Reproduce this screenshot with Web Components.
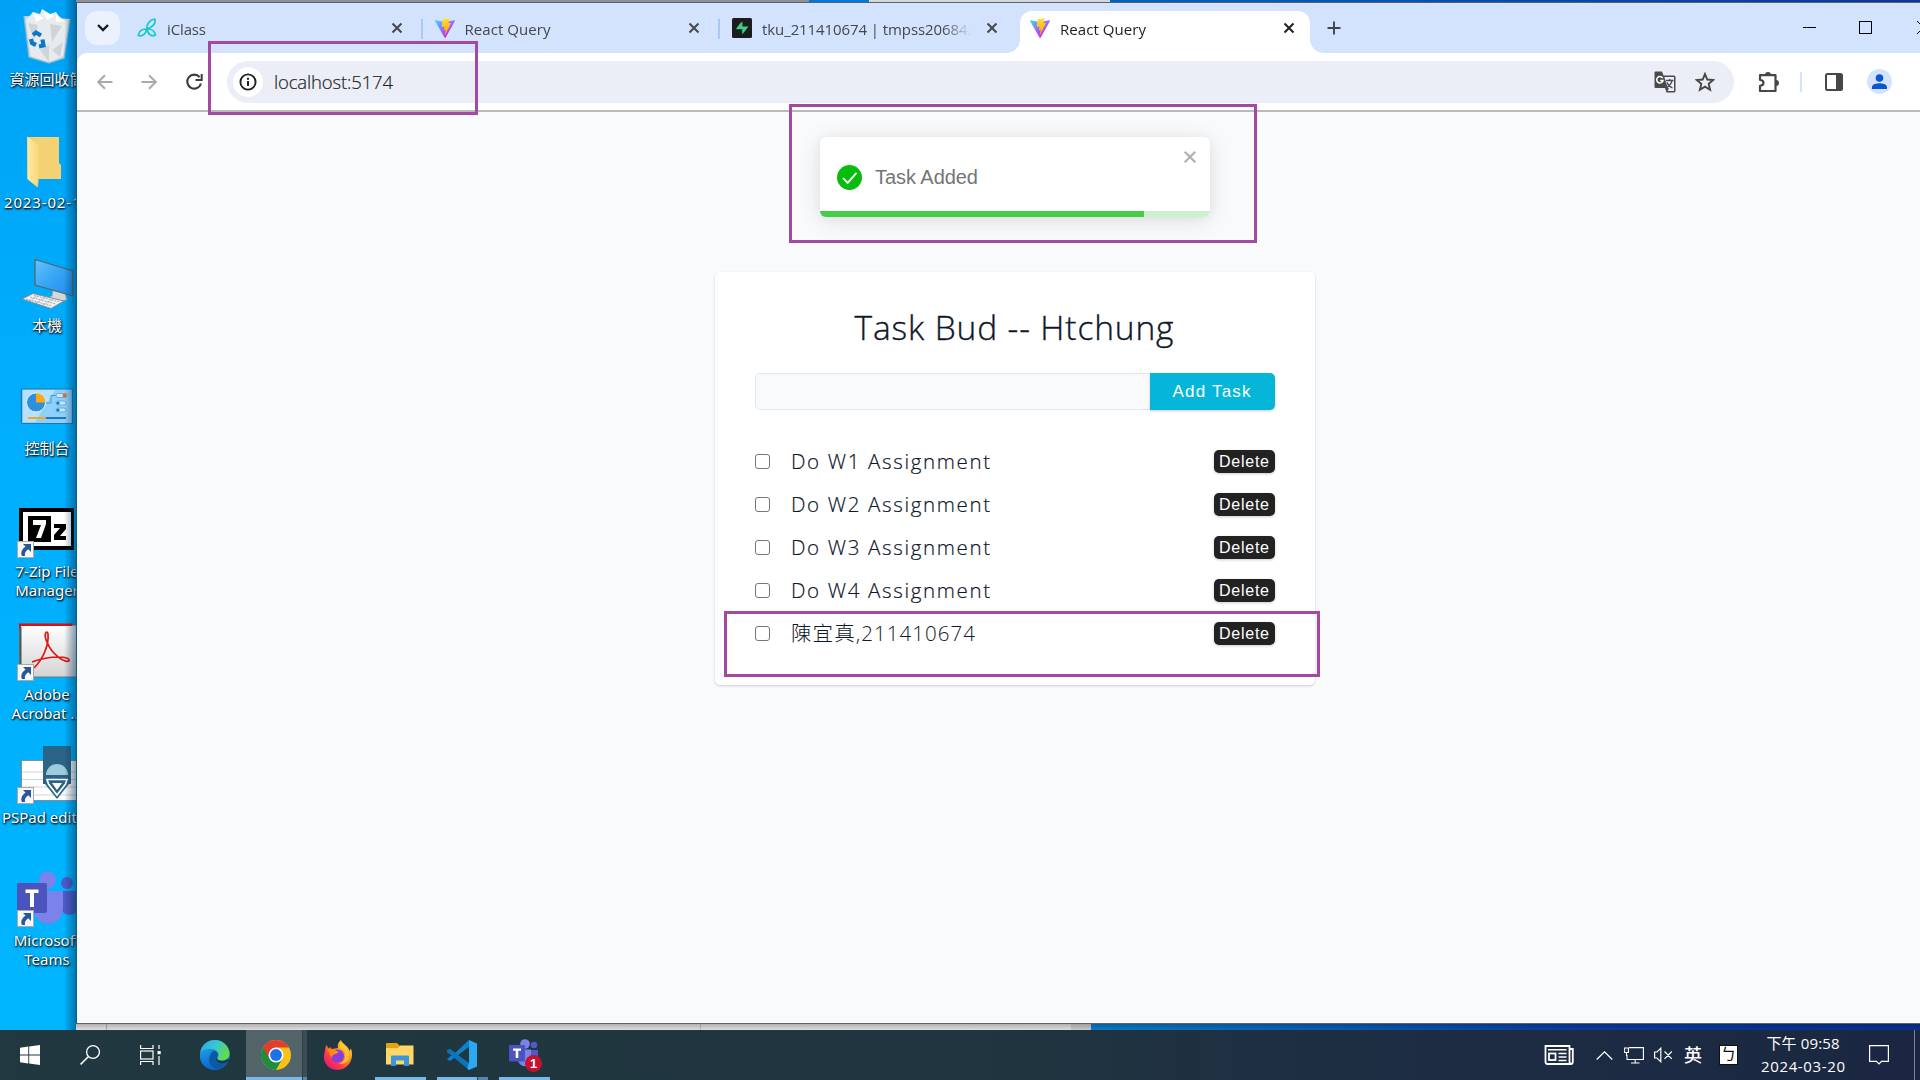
<!DOCTYPE html>
<html lang="zh-Hant">
<head>
<meta charset="utf-8">
<title>React Query</title>
<style>
html,body{margin:0;width:1920px;height:1080px;overflow:hidden}
body{font-family:"Open Sans","Noto Sans CJK TC",sans-serif}
</style>
</head>
<body>
<desktop-screen></desktop-screen>
<script>
const ICONS = {
vite:[256,257,`<defs><linearGradient id="a" x1="-.8%" x2="57.6%" y1="7.6%" y2="78.4%"><stop offset="0" stop-color="#41D1FF"/><stop offset="1" stop-color="#BD34FE"/></linearGradient><linearGradient id="b" x1="43.4%" x2="50.3%" y1="2.2%" y2="89%"><stop offset="0" stop-color="#FFEA83"/><stop offset=".083" stop-color="#FFDD35"/><stop offset="1" stop-color="#FFA800"/></linearGradient></defs><path fill="url(#a)" d="M255.153 37.938L134.897 252.976c-2.483 4.44-8.862 4.466-11.382.048L.875 37.958c-2.746-4.814 1.371-10.646 6.827-9.67l120.385 21.517a6.537 6.537 0 0 0 2.322-.004l117.867-21.483c5.438-.991 9.574 4.796 6.877 9.62Z"/><path fill="url(#b)" d="M185.432.063L96.44 17.501a3.268 3.268 0 0 0-2.634 3.014l-5.474 92.456a3.268 3.268 0 0 0 3.997 3.378l24.777-5.718c2.318-.535 4.413 1.507 3.936 3.838l-7.361 36.047c-.495 2.426 1.782 4.5 4.151 3.78l15.304-4.649c2.372-.72 4.652 1.36 4.15 3.788l-11.698 56.621c-.732 3.542 3.979 5.473 5.943 2.437l1.313-2.028l72.516-144.72c1.215-2.423-.88-5.186-3.54-4.672l-25.505 4.922c-2.396.462-4.435-1.77-3.759-4.114l16.646-57.705c.677-2.35-1.37-4.583-3.769-4.113Z"/>`],
iclass:[20,20,`<g fill="none" stroke="#19c8cf" stroke-width="1.700" stroke-linejoin="round"><path d="M9.800 11C9.500 6 13 1.600 17.800 1.200C19 5.500 15.500 9 9.800 11Z"/><path d="M9.800 11C5 10.800 2 13.200 1.200 17.500C5.500 18.800 8.800 16 9.800 11Z"/><path d="M9.800 11C13.500 10.800 17.500 12.500 18.500 17C15.500 18.800 11 17 9.800 11Z"/></g>`],
supabase:[20,20,`<rect width="20" height="20" rx="1.500" fill="#1c1c1c"/><path d="M11 3.500L4 11.300H9.700L9.900 16.500Z" fill="#249361"/><path d="M9.500 3.500L10 8.600H16.500L10.300 16.500V11H4Z" fill="#3ecf8e"/>`],
close:[12,12,`<path d="M1.500 1.500L10.500 10.500M10.500 1.500L1.500 10.500" stroke="currentColor" stroke-width="2"/>`],
plus:[14,14,`<path d="M7 .5V13.500M.5 7H13.500" stroke="currentColor" stroke-width="1.900"/>`],
chevron:[12,8,`<path d="M1 1L6 6L11 1" fill="none" stroke="#1b1b1f" stroke-width="2.400"/>`],
back:[16,16,`<path d="M15.500 8H1.500M8 1.200L1.200 8L8 14.800" fill="none" stroke="#aaa" stroke-width="2"/>`],
forward:[16,16,`<path d="M.5 8H14.500M8 1.200L14.800 8L8 14.800" fill="none" stroke="#aaa" stroke-width="2"/>`],
reload:[18,18,`<path d="M14.700 4.200A7 7 0 1 0 16 10.500" fill="none" stroke="#3c3c3f" stroke-width="2.100"/><path d="M16.700 1V7H10.500" fill="none" stroke="#3c3c3f" stroke-width="2"/>`],
info:[18,18,`<circle cx="9" cy="9" r="7.600" fill="none" stroke="#202124" stroke-width="1.900"/><path d="M9 8V13M9 4.800V6.700" stroke="#202124" stroke-width="2"/>`],
translate:[22,22,`<path d="M1.500 .5H8L9.500 4.500H20Q21.500 4.500 21.500 6V20Q21.500 21.500 20 21.500H12.500L11 17H1.500Q.5 17 .5 16V1.500Q.5 .5 1.500 .5" fill="#4a4a4d"/><path d="M10.300 6H20V20H13.500L15.200 17.200H13.800Z" fill="#eceef8"/><path d="M8.700 7.200A3.200 3.200 0 1 0 9 9.500H6.200" stroke="#fff" stroke-width="1.500" fill="none"/><path d="M12 9.500H19.500M15.800 8V9.500M18 9.700C17.500 13 15 15 13 16.500M13 11.500C14 14 16 16 18.500 17" stroke="#4a4a4d" stroke-width="1.300" fill="none"/>`],
star:[20,20,`<path d="M10 2L12.300 7.500L18.200 8L13.700 11.900L15.100 17.700L10 14.600L4.900 17.700L6.300 11.900L1.800 8L7.700 7.500Z" fill="none" stroke="#444746" stroke-width="1.900"/>`],
puzzle:[22,22,`<path d="M2 4.200H17.500V20H2V14.800Q5.500 14.500 5.500 11.800T2 8.800Z" fill="none" stroke="#474747" stroke-width="2.200" stroke-linejoin="round"/><path d="M7 4A3 3 0 0 1 13 4ZM18 9A3 3 0 0 1 18 15Z" fill="#474747"/>`],
panel:[18,18,`<rect x="1" y="1" width="16" height="16" rx="1.500" fill="none" stroke="#474747" stroke-width="2"/><path d="M11 1H17V17H11Z" fill="#474747"/>`],
avatar:[25,25,`<circle cx="12.500" cy="12.500" r="12.500" fill="#d3e3fd"/><circle cx="12.500" cy="9" r="3.800" fill="#0b57d0"/><path d="M5 20V18C5 15 10 14.200 12.500 14.200S20 15 20 18V20Z" fill="#0b57d0"/>`],
check:[25,25,`<circle cx="12.500" cy="12.500" r="12.500" fill="#07bc0c"/><path d="M6 13.200L10.700 17.900L19.500 7.900" fill="none" stroke="#fff" stroke-width="1.900"/>`],
recycle:[76,66,`<path d="M24 16L70 19L64 58L49 63L29 57Z" fill="#d9e2e8" opacity=".95"/><path d="M26 20L33 12L40 14L42 9L50 14L56 12L60 18L67 21L63 56L49 62L31 56Z" fill="#e8ebed"/><path d="M33 12L44 18L36 22ZM42 10L54 16L47 20ZM56 14L65 21L56 22Z" fill="#fff"/><path d="M28 23L38 25L34 40ZM50 24L62 26L52 42ZM40 50L49 45L49 62ZM52 50L63 42L60 57Z" fill="#cfd4d8"/><path d="M24 16L29 57L49 63L64 58L70 19" fill="none" stroke="#8fb9cf" stroke-width="1.300"/><g fill="none" stroke="#0a77cf" stroke-width="4.200"><path d="M33 35L36 32.500L41 35.500"/><path d="M31 39L32 43L36 45"/><path d="M39 46.500L43.500 45.500L42.500 39.500"/></g>`],
folder:[76,66,`<defs><linearGradient id="f"><stop stop-color="#ffe9a6"/><stop offset="1" stop-color="#f8d775"/></linearGradient></defs><path d="M27 14H59V40L61 42V56H28Z" fill="#f4d273"/><path d="M27.500 14L39 22V50L37.500 64L27.500 56Z" fill="url(#f)" stroke="#f5d67f" stroke-width=".6"/>`],
pc:[76,66,`<defs><linearGradient id="p" x2="1" y2="1"><stop stop-color="#66c3ff"/><stop offset=".5" stop-color="#35a4f5"/><stop offset="1" stop-color="#1f8ce8"/></linearGradient></defs><path d="M53 44L65 47L67 54L55 56L44 53L52 50Z" fill="#d2d7da" stroke="#8d969b" stroke-width=".6"/><path d="M35 13.500L73 25V50L35 39Z" fill="url(#p)" stroke="#54656f" stroke-width="1.300"/><path d="M22 53L33 47.500L64 55L51 62.500Z" fill="#eef0f1" stroke="#858b8f"/><path d="M26 53L52 60M30 51L56 58M34 49.500L60 56M29 55L39 49M36 57L46 51M43 59L53 53" stroke="#969da2" stroke-width=".8" stroke-dasharray="2 1"/>`],
control:[76,66,`<rect x="21.500" y="20" width="51" height="34.500" rx="1" fill="#8fd0fa" stroke="#2276b0" stroke-width="1.200"/><path d="M23 21H55L35 53H23Z" fill="#b6e1fc"/><circle cx="36" cy="33.500" r="9.500" fill="#2f8fdc" stroke="#d9f0ff"/><path d="M36 33.500V24A9.500 9.500 0 0 1 45.500 33.500Z" fill="#ffa914"/><path d="M46 34H51V26.500H56" fill="none" stroke="#3e9cd9"/><g fill="#c9e8fc" stroke="#5fb2e6"><rect x="56" y="24.500" width="11" height="4" rx="2"/><rect x="56" y="32" width="10" height="4" rx="2"/><rect x="56" y="39" width="10" height="4" rx="2"/></g><circle cx="64.500" cy="26.500" r="2" fill="#f06c1a"/><circle cx="58" cy="34" r="1.600" fill="#1670b8"/><circle cx="58" cy="41" r="1.600" fill="#1670b8"/><path d="M28 49H46" stroke="#f6a61f" stroke-width="2"/><path d="M46 49H66" stroke="#1c79c8" stroke-width="2"/>`],
sevenzip:[76,66,`<rect x="19" y="16" width="55" height="42" fill="#000"/><rect x="23" y="20" width="48" height="34" fill="#fff"/><rect x="28" y="24" width="23" height="26" fill="#000"/><path d="M33 28H46V32L41 46H36L41 33H33Z" fill="#fff"/><path d="M54 32H66V37L60 44H66V48H54V43L60 36H54Z" fill="#000"/>`],
adobe:[76,66,`<defs><linearGradient id="d" x2="0" y2="1"><stop stop-color="#fff"/><stop offset="1" stop-color="#d4d4d4"/></linearGradient></defs><rect x="19.500" y="10" width="57" height="52" fill="url(#d)" stroke="#777"/><path d="M19 8.500H73L72 11H21L21 14H19Z" fill="#e20d0d"/><path d="M20.500 12V50" stroke="#555" stroke-width="2"/><path d="M34 53C44 43 49 29 48 19C47 14 43 19 47 27C52 40 65 48 69 46C71 41 51 40 32 47" fill="none" stroke="#e01515" stroke-width="1.700"/>`],
pspad:[76,66,`<rect x="21.500" y="22.500" width="55" height="40" fill="#fff" stroke="#8c8c8c"/><path d="M22 34H76M22 41.500H76M22 49H76M22 57H76" stroke="#cfd3d5"/><rect x="43" y="8" width="28" height="38" fill="#2b6486"/><path d="M46 37A11 11 0 0 1 68 37Z" fill="#9fcadb"/><path d="M43 40H71L69 46L57 61L45 46Z" fill="#2b6486"/><path d="M47 41.500H67L65.500 46L57 57L48.500 46Z" fill="none" stroke="#fff" stroke-width="1.700"/><path d="M52 45H62L57 52Z" fill="#fff"/>`],
teamsbig:[76,66,`<circle cx="47.500" cy="19" r="8.500" fill="#7b83eb"/><circle cx="67" cy="22" r="6" fill="#5059c9"/><path d="M60 30H76V52C68 57 60 51 60 45Z" fill="#5059c9"/><path d="M34 30H63V47C63 59 54 63 48 63S34 58 34 48Z" fill="#7b83eb"/><rect x="17" y="22" width="30" height="30" rx="2" fill="#4b53bc"/><path d="M25.500 28.500H38.500V32H34V46H30V32H25.500Z" fill="#fff"/>`],
shortcut:[17,17,`<rect x=".5" y=".5" width="16" height="16" fill="#f7f8f9" stroke="#aaa"/><path d="M6 3H14V11L11.300 8.300Q7 11 8 15H5Q2.500 10 8.500 5.500Z" fill="#2b5797"/>`],
win:[20,20,`<path d="M0 2.800L8.300 1.600V9.500H0ZM9.200 1.500L20 0V9.500H9.200ZM0 10.500H8.300V18.400L0 17.200ZM9.200 10.500H20V20L9.200 18.500Z" fill="#fff"/>`],
search:[20,20,`<circle cx="13" cy="7" r="6.400" fill="none" stroke="#fff" stroke-width="1.300"/><path d="M8.500 11.500L.6 19.400" stroke="#fff" stroke-width="1.500"/>`],
taskview:[21,20,`<path d="M.6 0V3.500H13V0M.6 20V16.500H13V20" fill="none" stroke="#fff" stroke-width="1.200"/><rect x=".6" y="6" width="12.400" height="8" fill="none" stroke="#fff" stroke-width="1.200"/><path d="M19 0V4M19 11V20" stroke="#fff" stroke-width="1.200"/><rect x="17.500" y="6" width="3.200" height="3.200" fill="#fff"/>`],
edge:[30,30,`<defs><linearGradient id="e" x2="1" y2=".4"><stop stop-color="#27a7e8"/><stop offset=".55" stop-color="#38c7d5"/><stop offset="1" stop-color="#62dc48"/></linearGradient><linearGradient id="g" x2=".3" y2="1"><stop stop-color="#1d9ce5"/><stop offset="1" stop-color="#0868cc"/></linearGradient></defs><circle cx="15" cy="15" r="15" fill="url(#g)"/><path d="M.2 13C2-1 18-3 25 4C31 10 31 18 25 20C21 21 17 20 17 18C20 15 18 9 11 9C5 9 1 11 .2 13Z" fill="url(#e)"/><path d="M10 19C9 13 13 10 16 11.500C18.500 13 19 16 17 18C17.500 21.500 24 22 27.500 19.500L28 21.500C25 27 20 30 15 30C9 29 3 21 10 14Z" fill="#0c59a4"/><path d="M11 14C6 20 11 29 19 29.400C8 32-2 24 .2 13C1 10 8 8 12 10Z" fill="url(#g)"/><path d="M16.800 18C17 21.500 23 22.300 28.500 18.800V20.500L31 19V22L27.500 22C24 24 16 24 16 18Z" fill="#213840"/>`],
chrome:[30,30,`<circle cx="15" cy="15" r="15" fill="#fbc116"/><path d="M15 15L2 7.500A15 15 0 0 0 15 30L21.500 18.500Z" fill="#1e8e3e"/><path d="M15 0A15 15 0 0 1 28 7.500H15L8.500 18.800L2 7.500A15 15 0 0 1 15 0Z" fill="#e33b2e"/><circle cx="15" cy="15" r="7.500" fill="#fff"/><circle cx="15" cy="15" r="5.900" fill="#1a73e8"/>`],
firefox:[30,30,`<defs><linearGradient id="x" x1="1" x2=".2" y2="1"><stop stop-color="#fff44f"/><stop offset=".4" stop-color="#ff9a1f"/><stop offset=".75" stop-color="#ff3647"/><stop offset="1" stop-color="#e31587"/></linearGradient></defs><path d="M18 0C20 5 25 5 26.500 11L28 8.500C32 20 24 30 15 30C5 30-1 22 1.500 13L3 5L6 8.500L7.500 7L8.500 9L15 8C14 4 16 2 18 0Z" fill="url(#x)"/><circle cx="14.500" cy="16" r="6.600" fill="#8a3ddf"/><path d="M4 9L12 10L16 12L13 14Q9 14 9 18C7 16 7 12 4 9Z" fill="#ff8a16"/><path d="M16 8Q23 9 22 17Q21 23 15 23Q23 26 26 18Q27 10 18 3Z" fill="#ffd23a" opacity=".75"/>`],
explorer:[28,24,`<path d="M0 1Q0 0 1 0H11L13.500 2.500V8H0Z" fill="#e5a40e"/><path d="M0 5H12L14 2.500H27.500V21.500H0Z" fill="#ffd767"/><path d="M5 23V13.500Q5 12.500 6 12.500H22Q23 12.500 23 13.500V23H18V17.500H10V23Z" fill="#3a96dd"/>`],
vscode:[30,30,`<path d="M22 0L8 13L3 9L0 10.500V12L5 15L0 19L3 21L22 7Z" fill="#0b83cc"/><path d="M3 9L22 23V30L0 12V10.500Z" fill="#0a75ba"/><path d="M22 0L30 3.500V26.500L22 30Q20 29 20.500 28L22 22Z" fill="#2ba8f0"/>`],
teams:[33,32,`<circle cx="16" cy="5" r="4.800" fill="#7b83eb"/><circle cx="25" cy="6" r="3.300" fill="#5059c9"/><path d="M20 11H29V18C29 24 22 23 20 20Z" fill="#5059c9"/><path d="M9 10.500H22V20C22 30 9 29 9 20Z" fill="#7b83eb"/><rect y="6" width="16" height="16.500" rx="1" fill="#4b53bc"/><path d="M4 9.500H12V11.700H9.300V19H6.700V11.700H4Z" fill="#fff"/>`],
news:[30,20,`<path d="M1.500 1H25.500V16.500Q25.500 19 28 19H3.500Q1.500 19 1.500 16.500ZM25.500 4H28.800V16.500Q28.800 19 27 19" fill="none" stroke="#fff" stroke-width="1.800"/><rect x="5" y="8.500" width="6.500" height="6.500" fill="none" stroke="#fff" stroke-width="1.800"/><path d="M4 4.800H22.500M14.500 8.500H22.500M14.500 12H22.500M14.500 15.500H22.500" stroke="#fff" stroke-width="1.600"/>`],
caret:[17,9,`<path d="M.7 8.500L8.500 .8L16.300 8.500" fill="none" stroke="#fff" stroke-width="1.200"/>`],
network:[20,17,`<path d="M5 .6H19.400V12.500H3V8M11.200 12.500V16M7 16H15.500" fill="none" stroke="#fff" stroke-width="1.100"/><path d="M.6 1H4.400V5.500H.6ZM2.500 5.500V9" fill="none" stroke="#fff" stroke-width="1.100"/>`],
mute:[19,16,`<path d="M.6 5H3L6.800 1.200V14.800L3 11H.6ZM10.500 4.500L17.800 11.800M17.800 4.500L10.500 11.800" fill="none" stroke="#fff" stroke-width="1.200"/>`],
notify:[20,20,`<path d="M.6 .6H19.400V16.400H12.500L10 19L7.500 16.400H.6Z" fill="none" stroke="#fff" stroke-width="1.200"/>`]
};
/* Builds an element class from shadow markup. */
const def = (name, html) => customElements.define(name, class extends HTMLElement {
  constructor(){ super(); this.attachShadow({mode:'open'}); }
  connectedCallback(){ this.shadowRoot.innerHTML = typeof html === 'function' ? html(this) : html; }
});

def('ui-icon', el => {
  const [w,h,body] = ICONS[el.getAttribute('name')];
  const W = el.getAttribute('w') || w, H = el.getAttribute('h') || h;
  return `<style>:host{display:block;flex:none;width:${W}px;height:${H}px}svg{display:block;overflow:hidden}</style><svg width="${W}" height="${H}" viewBox="0 0 ${w} ${h}" preserveAspectRatio="none">${body}</svg>`;
});

def('desktop-icon', el => `<style>
:host{display:flex;flex-direction:column;height:123px;position:relative}
.l{width:94px;margin-top:4px;text-align:center;color:#fff;font-family:"Noto Sans","Noto Sans CJK TC",sans-serif;font-size:15px;line-height:19px;text-shadow:1px 1px 2px #000,0 1px 2px #000a;white-space:nowrap}
ui-icon.s{position:absolute;left:17px;top:49px}
</style><ui-icon name="${el.getAttribute('icon')}"></ui-icon>${el.hasAttribute('link')?'<ui-icon class="s" name="shortcut"></ui-icon>':''}<div class="l"><slot></slot></div>`);

def('browser-tab', el => {
  const a = el.hasAttribute('active');
  return `<style>
:host{display:flex;align-items:center;box-sizing:border-box;flex:none;height:42px;margin-top:8px;width:${a?290:297.5}px;padding:0 ${a?15:20}px 8px ${a?10:12}px;position:relative;color:${a?'#1f1f1f':'#45474b'};font-weight:400;font-size:15px;${a?'background:#fff;border-radius:12px 12px 0 0;margin-left:2.500px':''}}
.t{flex:1;margin-left:10px;margin-top:1px;white-space:nowrap;overflow:hidden;line-height:22px;-webkit-mask:linear-gradient(90deg,#000 calc(100% - 28px),transparent)}
.x{margin-left:15px;color:${a?'#1f1f1f':'#45474b'}}
i{position:absolute;right:0;top:8px;width:2px;height:20px;background:#a8c7fa}
:host([active])::before,:host([active])::after{content:"";position:absolute;bottom:0;width:13px;height:13px;background:radial-gradient(circle at 0 0,transparent 12.500px,#fff 13px)}
:host([active])::before{left:-13px}:host([active])::after{right:-13px;transform:scaleX(-1)}
</style><ui-icon name="${el.getAttribute('icon')}" w="20" h="20"></ui-icon><div class="t"><slot></slot></div><ui-icon class="x" name="close" w="12" h="12"></ui-icon>${a||el.hasAttribute('nosep')?'':'<i></i>'}`;
});

def('browser-tabs', `<style>
:host{display:flex;height:50px;background:#d3e3fd;overflow:hidden}
.s{width:35px;height:34px;margin:8px 5px 0 8px;border-radius:12px;background:#ebf2fe;display:flex;align-items:center;justify-content:center}
.p{margin:18px 0 0 17px;color:#444}
.w{display:flex;flex:none;margin:18px 0 0 auto;width:117px;gap:43px}
.w>*{flex:none}
.m{width:13px;height:1px;background:#000;margin-top:6px}.q{width:11px;height:11px;border:1px solid #000;margin-right:2px}
</style><div class="s"><ui-icon name="chevron"></ui-icon></div>
<browser-tab icon="iclass"><fit-text w="39">iClass</fit-text></browser-tab>
<browser-tab icon="vite"><fit-text w="86">React Query</fit-text></browser-tab>
<browser-tab icon="supabase" nosep><fit-text w="214">tku_211410674 | tmpss206842</fit-text></browser-tab>
<browser-tab icon="vite" active><fit-text w="86">React Query</fit-text></browser-tab>
<ui-icon class="p" name="plus" w="14" h="14"></ui-icon>
<div class="w"><div class="m"></div><div class="q"></div><svg width="13" height="13"><path d="M0 0L13 13M13 0L0 13" stroke="#000"/></svg></div>`);

def('browser-toolbar', `<style>
:host{display:flex;align-items:center;height:57px;background:#fff;box-sizing:border-box;padding-left:20px;border-radius:10px 0 0 0;position:relative}
:host>*{flex:none}
.o{display:flex;align-items:center;width:1507px;height:42px;border-radius:21px;background:#ebeef7;box-sizing:border-box;padding:0 19px 0 6px;margin-left:24px}
.i{width:30px;height:30px;border-radius:50%;background:#fff;display:flex;align-items:center;justify-content:center}
.u{flex:1;margin-left:11px;font-size:18.500px;font-weight:300;color:#1f1f1f;-webkit-text-stroke:.2px #1f1f1f}
.v{width:2px;height:20px;background:#d3e3fd;margin:0 23px 0 20px}
</style><ui-icon name="back" style="margin-right:28px"></ui-icon><ui-icon name="forward" style="margin-right:28px"></ui-icon><ui-icon name="reload" style="margin-right:0"></ui-icon>
<div class="o"><div class="i"><ui-icon name="info"></ui-icon></div><div class="u"><fit-text w="119">localhost:5174</fit-text></div><ui-icon name="translate" style="margin-right:19px"></ui-icon><ui-icon name="star"></ui-icon></div>
<ui-icon name="puzzle" style="margin-left:24px"></ui-icon><div class="v"></div><ui-icon name="panel" style="margin-right:24px"></ui-icon><ui-icon name="avatar"></ui-icon>`);

def('toast-message', `<style>
:host{display:flex;flex-direction:column;width:390px;height:80px;border-radius:6px;background:#fff;overflow:hidden;box-shadow:0 1px 10px #0000000d,0 4px 24px #0000001a;font-family:"Liberation Sans",sans-serif}
.b{flex:1;display:flex;padding:0 13px 0 17px;align-items:center;font-size:20px;color:#757575;padding-top:7px}
.t{flex:1;margin-left:13px}
.c{color:#b2b2b2;align-self:flex-start;margin-top:6px}
.p{height:6px;background:#cbf2cd}.p div{width:324px;height:6px;background:#45cd48}
</style><div class="b"><ui-icon name="check"></ui-icon><div class="t"><slot></slot></div><ui-icon class="c" name="close" w="14" h="14"></ui-icon></div><div class="p"><div></div></div>`);

def('task-item', `<style>
:host{display:flex;align-items:center;height:43px;color:#0f172a}
.k{width:13px;height:13px;border:1px solid #767676;border-radius:3px;background:#fff;flex:none}
.t{flex:1;margin-left:21px;font-size:20.500px;font-weight:300;line-height:30px;padding-bottom:2px;-webkit-text-stroke:.2px #0f172a}
.d{width:61px;height:23px;border-radius:5px;background:#222;color:#fff;display:flex;align-items:center;justify-content:center;font:16px/23px "Liberation Sans",sans-serif;box-shadow:0 1px 3px #0003}
.d fit-text{position:relative;left:-.5px}
</style><div class="k"></div><div class="t"><slot></slot></div><div class="d"><fit-text w="50">Delete</fit-text></div>`);

def('task-card', `<style>
:host{display:block;box-sizing:border-box;width:600px;height:413px;padding:32px 40px 0;border-radius:5px;background:#fff;box-shadow:0 1px 3px #0000001f,0 1px 2px #0000000f}
h1{margin:0;font-size:33.500px;font-weight:300;line-height:46px;text-align:center;padding-right:2px;color:#0f172a;-webkit-text-stroke:.35px #0f172a}
.f{display:flex;height:37px;margin:23px 0 30px}
.n{flex:1;background:#f8fafc;border:1px solid #e2e8f0;border-right:0;border-radius:5px 0 0 5px}
.a{width:125px;background:#06b6d9;color:#fff;border-radius:0 5px 5px 0;display:flex;align-items:center;justify-content:center;box-sizing:border-box;padding-right:2px;font:17px "Liberation Sans",sans-serif;box-shadow:0 1px 3px #0003}
</style><h1><fit-text w="319">Task Bud -- Htchung</fit-text></h1><div class="f"><div class="n"></div><div class="a"><fit-text w="78">Add Task</fit-text></div></div>
<task-item><fit-text w="199">Do W1 Assignment</fit-text></task-item>
<task-item><fit-text w="199">Do W2 Assignment</fit-text></task-item>
<task-item><fit-text w="199">Do W3 Assignment</fit-text></task-item>
<task-item><fit-text w="199">Do W4 Assignment</fit-text></task-item>
<task-item style="font-family:'Open Sans','Noto Sans CJK TC Light','Noto Sans CJK TC',sans-serif"><fit-text w="184" style="-webkit-text-stroke:0">陳宜真,211410674</fit-text></task-item>`);

def('browser-window', `<style>
:host{display:flex;flex-direction:column;flex:1;border:1px solid #59626d;border-left-color:#155a80;border-right:0;background:#d3e3fd;width:1844px;box-sizing:border-box}
.c{flex:1;background:#f8fafc;border-top:2px solid;border-image:linear-gradient(#b9bbbb 50%,#e3e5e6 50%) 2;display:flex;flex-direction:column;align-items:center;padding:25px 0 0 33px;gap:55px}
</style><browser-tabs></browser-tabs><browser-toolbar></browser-toolbar><div class="c"><toast-message><fit-text w="103">Task Added</fit-text></toast-message><task-card></task-card></div>`);

def('task-slot', el => `<style>
:host{display:flex;align-items:center;justify-content:center;box-sizing:border-box;height:50px;width:${el.getAttribute('w')}px;flex:none;position:relative}
:host([open]){border-bottom:3px solid #76b9ed;padding-top:3px}
:host([active]){background:#526369}
:host([stack])::after{content:"";position:absolute;right:0;top:0;bottom:-3px;width:${el.hasAttribute('active')?4:10}px;background:#18222855;border-left:1px solid #2c3d45}
:host([stack]:not([active]))::after{height:3px;bottom:auto;top:47px}
b{position:absolute;left:26px;top:25px;width:17px;height:17px;border-radius:50%;background:#c4122f;color:#fff;font:bold 13px/17px "Liberation Sans",sans-serif;text-align:center}
</style><ui-icon name="${el.getAttribute('icon')}"></ui-icon>${el.hasAttribute('badge')?`<b>${el.getAttribute('badge')}</b>`:''}`);

def('task-bar', `<style>
:host{display:flex;height:50px;background:linear-gradient(90deg,#213840,#20353f 50%,#1d2c43 75%,#1b2742);color:#fff}
.r{display:flex;align-items:center;margin-left:auto}
.e{font-size:18px;line-height:24px;width:18px;margin:0 17px 0 11px;font-weight:500}
.z{width:17px;height:18px;background:#fff;color:#111;border:1px solid #111;font-size:16px;line-height:17px;text-align:center}
.d{width:86px;text-align:center;font-size:15px;line-height:23px;margin:0 23px 0 22px}
.x{width:1px;height:50px;background:#7a8293;margin:0 5px 0 25px}
</style><task-slot w="60" icon="win"></task-slot><task-slot w="60" icon="search"></task-slot><task-slot w="60" icon="taskview"></task-slot><task-slot w="66" icon="edge" style="padding-left:3px"></task-slot><task-slot w="61" icon="chrome" open active stack style="padding-right:1px"></task-slot><task-slot w="62" icon="firefox" style="margin-right:6px"></task-slot><task-slot w="51" icon="explorer" open style="margin-right:11px;padding-right:2px"></task-slot><task-slot w="51" icon="vscode" open stack style="margin-right:11px;padding-right:2px"></task-slot><task-slot w="51" icon="teams" open badge="1" style="padding-left:2px"></task-slot>
<div class="r"><ui-icon name="news" style="margin-right:22px"></ui-icon><ui-icon name="caret" style="margin-right:11px"></ui-icon><ui-icon name="network" style="margin-right:10px"></ui-icon><ui-icon name="mute"></ui-icon><div class="e">英</div><div class="z">ㄅ</div><div class="d"><fit-text w="73">下午 09:58</fit-text><br><fit-text w="84">2024-03-20</fit-text></div><ui-icon name="notify"></ui-icon><div class="x"></div></div>`);

def('mark-box', el => { const [x,y,w,h] = el.getAttribute('box').split(' ');
  return `<style>:host{position:absolute;box-sizing:border-box;left:${x}px;top:${y}px;width:${w}px;height:${h}px;border:3px solid #a349a4}</style>`; });

def('desktop-screen', `<style>
:host{display:flex;flex-direction:column;width:1920px;height:1080px;overflow:hidden;position:relative}
.m{display:flex;height:1030px}
.d{width:76px;overflow:hidden;background:linear-gradient(#00a2f6,#00aefd 40%,#00b5ff);position:relative}
.d::after{content:"";position:absolute;right:0;top:0;bottom:0;width:12px;background:linear-gradient(90deg,transparent,#002a4a77)}
.w{display:flex;flex-direction:column;width:1844px}
.t{height:2px;background:linear-gradient(90deg,#8d9094 733px,#0078d7 733px 793px,#d5d7d8 793px 1034px,#0062b9 1034px,#0b3796)}
.b{height:6px;background:linear-gradient(#0003,transparent),linear-gradient(90deg,#ddd 30px,#aaa 30px 31px,#ddd 31px 624px,#bbb 624px 625px,#ddd 625px 995px,#c8c8c8 995px 1015px,#0a7bc7 1015px,#0a3ca0 1500px,#08308f)}
</style><div class="m"><div class="d">
<desktop-icon icon="recycle">資源回收筒</desktop-icon><desktop-icon icon="folder"><fit-text w="86">2023-02-17</fit-text></desktop-icon><desktop-icon icon="pc">本機</desktop-icon><desktop-icon icon="control">控制台</desktop-icon><desktop-icon icon="sevenzip" link>7-Zip File<br>Manager</desktop-icon><desktop-icon icon="adobe" link>Adobe<br>Acrobat ...</desktop-icon><desktop-icon icon="pspad" link>PSPad editor</desktop-icon><desktop-icon icon="teamsbig" link>Microsoft<br>Teams</desktop-icon>
</div><div class="w"><div class="t"></div><browser-window></browser-window><div class="b"></div></div></div><task-bar></task-bar>
<mark-box box="208 41 270 74"></mark-box><mark-box box="789 104 468 139"></mark-box><mark-box box="724 611 596 66"></mark-box>`);

/* Spreads its text over a given width by letter spacing. */
customElements.define('fit-text', class extends HTMLElement {
  constructor(){ super(); this.attachShadow({mode:'open'}).innerHTML = '<style>:host{display:inline-block;white-space:nowrap}</style><slot></slot>'; }
  connectedCallback(){
    const n = [...this.textContent].length, w = +this.getAttribute('w');
    this.style.letterSpacing = '0px';
    const s = (w - this.getBoundingClientRect().width) / (n - 1);
    this.style.letterSpacing = s + 'px';
    this.style.marginRight = -s + 'px';
  }
});
</script>
</body>
</html>
